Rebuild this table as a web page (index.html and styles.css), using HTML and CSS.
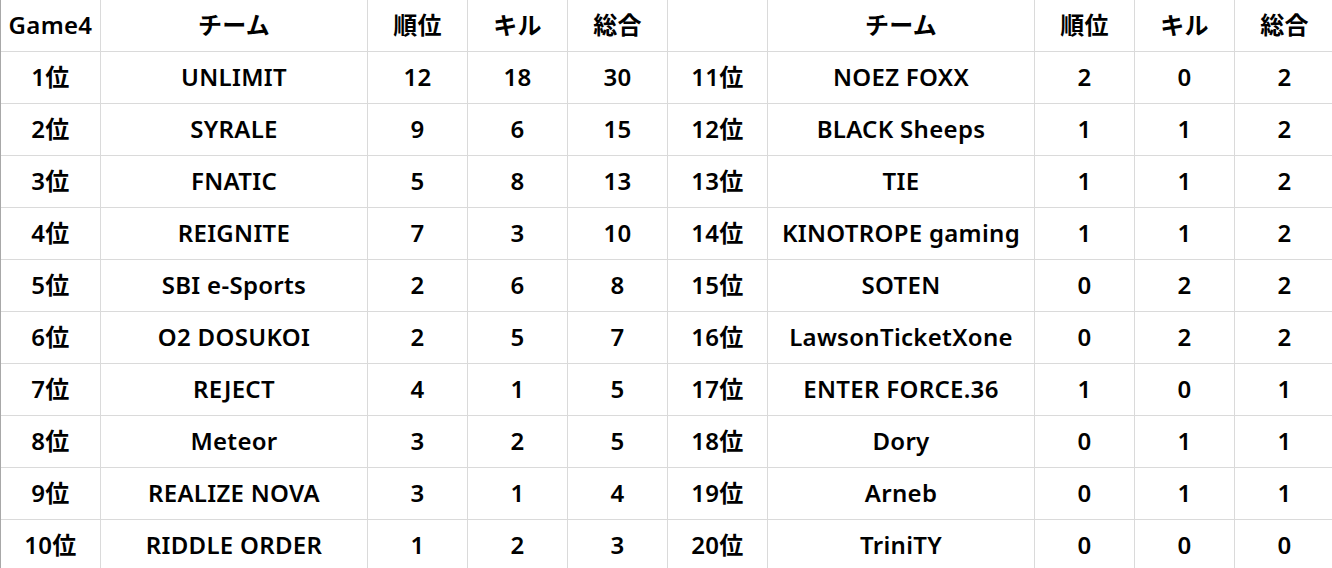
FILE: index.html
```html
<!DOCTYPE html>
<html lang="ja">
<head>
<meta charset="utf-8">
<link rel="stylesheet" href="styles.css">
</head>
<body>
<div class="sheet">
  <div class="row">
    <div class="c">Game4</div><div class="c w">チーム</div><div class="c">順位</div><div class="c">キル</div><div class="c">総合</div>
    <div class="c"></div><div class="c w">チーム</div><div class="c">順位</div><div class="c">キル</div><div class="c">総合</div>
  </div>
  <div class="row">
    <div class="c">1位</div><div class="c w">UNLIMIT</div><div class="c">12</div><div class="c">18</div><div class="c">30</div>
    <div class="c">11位</div><div class="c w">NOEZ FOXX</div><div class="c">2</div><div class="c">0</div><div class="c">2</div>
  </div>
  <div class="row">
    <div class="c">2位</div><div class="c w">SYRALE</div><div class="c">9</div><div class="c">6</div><div class="c">15</div>
    <div class="c">12位</div><div class="c w">BLACK Sheeps</div><div class="c">1</div><div class="c">1</div><div class="c">2</div>
  </div>
  <div class="row">
    <div class="c">3位</div><div class="c w">FNATIC</div><div class="c">5</div><div class="c">8</div><div class="c">13</div>
    <div class="c">13位</div><div class="c w">TIE</div><div class="c">1</div><div class="c">1</div><div class="c">2</div>
  </div>
  <div class="row">
    <div class="c">4位</div><div class="c w">REIGNITE</div><div class="c">7</div><div class="c">3</div><div class="c">10</div>
    <div class="c">14位</div><div class="c w">KINOTROPE gaming</div><div class="c">1</div><div class="c">1</div><div class="c">2</div>
  </div>
  <div class="row">
    <div class="c">5位</div><div class="c w">SBI e-Sports</div><div class="c">2</div><div class="c">6</div><div class="c">8</div>
    <div class="c">15位</div><div class="c w">SOTEN</div><div class="c">0</div><div class="c">2</div><div class="c">2</div>
  </div>
  <div class="row">
    <div class="c">6位</div><div class="c w">O2 DOSUKOI</div><div class="c">2</div><div class="c">5</div><div class="c">7</div>
    <div class="c">16位</div><div class="c w">LawsonTicketXone</div><div class="c">0</div><div class="c">2</div><div class="c">2</div>
  </div>
  <div class="row">
    <div class="c">7位</div><div class="c w">REJECT</div><div class="c">4</div><div class="c">1</div><div class="c">5</div>
    <div class="c">17位</div><div class="c w">ENTER FORCE.36</div><div class="c">1</div><div class="c">0</div><div class="c">1</div>
  </div>
  <div class="row">
    <div class="c">8位</div><div class="c w">Meteor</div><div class="c">3</div><div class="c">2</div><div class="c">5</div>
    <div class="c">18位</div><div class="c w">Dory</div><div class="c">0</div><div class="c">1</div><div class="c">1</div>
  </div>
  <div class="row">
    <div class="c">9位</div><div class="c w">REALIZE NOVA</div><div class="c">3</div><div class="c">1</div><div class="c">4</div>
    <div class="c">19位</div><div class="c w">Arneb</div><div class="c">0</div><div class="c">1</div><div class="c">1</div>
  </div>
  <div class="row">
    <div class="c">10位</div><div class="c w">RIDDLE ORDER</div><div class="c">1</div><div class="c">2</div><div class="c">3</div>
    <div class="c">20位</div><div class="c w">TriniTY</div><div class="c">0</div><div class="c">0</div><div class="c">0</div>
  </div>
</div>
</body>
</html>
```

FILE: styles.css
```css
html, body {
  margin: 0;
  padding: 0;
  background: #ffffff;
  overflow: hidden;
}
.sheet {
  width: 1334px;
  border-left: 1px solid #a8a8a8;
  font-family: "Noto Sans", "Noto Sans CJK JP", sans-serif;
  font-weight: 600;
  font-size: 24px;
  letter-spacing: 0.3px;
  color: #000;
}
.row {
  display: grid;
  grid-template-columns: 100px 267px 100px 100px 100px 100px 267px 100px 100px 100px;
  height: 52px;
}
.c {
  box-sizing: border-box;
  border-right: 1px solid #dadada;
  border-bottom: 1px solid #dadada;
  display: flex;
  align-items: center;
  justify-content: center;
  white-space: nowrap;
  line-height: 1;
  padding-bottom: 2px;
}
```
